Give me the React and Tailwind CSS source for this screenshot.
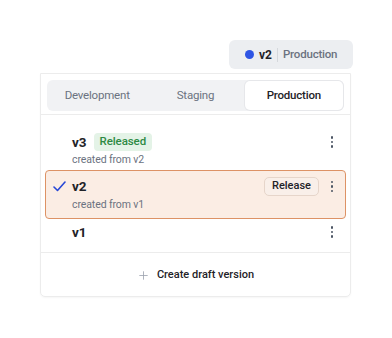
import { Plus } from "lucide-react";

const font = { fontFamily: "Roboto, 'Noto Sans', sans-serif" };

function Kebab() {
  return (
    <div className="w-[16px] flex flex-col items-center gap-[2px]">
      <span className="w-[2.5px] h-[2.5px] rounded-full bg-[#4b5563]" />
      <span className="w-[2.5px] h-[2.5px] rounded-full bg-[#4b5563]" />
      <span className="w-[2.5px] h-[2.5px] rounded-full bg-[#4b5563]" />
    </div>
  );
}

function Check() {
  return (
    <svg width="13" height="11" viewBox="0 0 13 11" fill="none">
      <path d="M1 6l3.5 3.5L12 1" stroke="#2747d6" strokeWidth="1.6" strokeLinecap="round" strokeLinejoin="round" />
    </svg>
  );
}

export default function App() {
  return (
    <div className="w-[392px] h-[338px] bg-white pt-[40px] px-[40px]" style={font}>
      {/* Current version badge */}
      <div className="flex justify-end -mr-[1px]">
        <div className="h-[29px] w-[124px] rounded-[6px] bg-[#eceef1] flex items-center pl-[16px]">
          <span className="w-[9px] h-[9px] rounded-full bg-[#2f55e4]" />
          <span className="ml-[5px] text-[12px] font-bold text-[#1f2328]">v2</span>
          <span className="ml-[5px] w-px h-[14px] bg-[#d5d8dc]" />
          <span className="ml-[5px] text-[11.5px] tracking-[-0.2px] font-medium text-[#6b7280]">Production</span>
        </div>
      </div>

      {/* Card */}
      <div className="mt-[4px] w-[311px] border border-[#ececec] rounded-b-[5px] shadow-[0_1px_2px_rgba(0,0,0,0.04)]">
        <div className="pt-[6px] px-[6px] pb-[3px] border-b border-[#ececec]">
          <div className="h-[31px] rounded-[6px] bg-[#f1f2f4] p-[1px] grid grid-cols-3">
            <div className="flex items-center justify-center text-[11.5px] tracking-[-0.2px] text-[#6b7280]">Development</div>
            <div className="flex items-center justify-center text-[11.5px] tracking-[-0.2px] text-[#6b7280]">Staging</div>
            <div className="flex items-center justify-center text-[11.5px] tracking-[-0.2px] font-medium text-[#1f2328] bg-white rounded-[5px] shadow-[0_0_0_1px_#e6e7ea]">
              Production
            </div>
          </div>
        </div>

        {/* Versions */}
        <div className="pt-[17px]">
          <div className="mx-[4px] pl-[7px] pr-[5px] border border-transparent pb-[1px]">
            <div className="flex items-center h-[18px]">
              <span className="w-[19px]" />
              <span className="text-[13.5px] font-bold text-[#1f2328]">v3</span>
              <span className="ml-[7px] h-[18px] px-[6px] rounded-[4px] bg-[#e4f3e7] text-[11.5px] tracking-[-0.1px] font-medium text-[#2e8a44] flex items-center">
                Released
              </span>
              <span className="flex-1" />
              <Kebab />
            </div>
            <div className="pl-[19px] h-[17px] flex items-center text-[10.5px] tracking-[-0.1px] text-[#6b7280]">created from v2</div>
          </div>

          <div className="mx-[4px] pl-[7px] pr-[5px] pt-[6px] pb-[5px] border border-[#dd9265] rounded-[4px] bg-[#fbede4]">
            <div className="flex items-center h-[19px]">
              <span className="w-[19px] flex items-center"><Check /></span>
              <span className="text-[13.5px] font-bold text-[#1f2328]">v2</span>
              <span className="flex-1" />
              <span className="h-[19px] px-[7px] rounded-[5px] border border-[#e6d5ca] bg-[#f9efe9] text-[11px] font-medium text-[#1f2328] flex items-center">
                Release
              </span>
              <span className="w-[5px]" />
              <Kebab />
            </div>
            <div className="pl-[19px] h-[17px] flex items-center text-[10.5px] tracking-[-0.1px] text-[#6b7280]">created from v1</div>
          </div>

          <div className="mx-[4px] pl-[7px] pr-[5px] border border-transparent pt-[3px] pb-[10px]">
            <div className="flex items-center h-[18px]">
              <span className="w-[19px]" />
              <span className="text-[13.5px] font-bold text-[#1f2328]">v1</span>
              <span className="flex-1" />
              <Kebab />
            </div>
          </div>
        </div>

        <div className="border-t border-[#ececec] h-[44px] pt-[2px] flex items-center justify-center gap-[7px]">
          <Plus size={13} strokeWidth={1.5} className="text-[#9ca3af]" />
          <span className="text-[11px] font-medium text-[#1f2328]">Create draft version</span>
        </div>
      </div>
    </div>
  );
}
